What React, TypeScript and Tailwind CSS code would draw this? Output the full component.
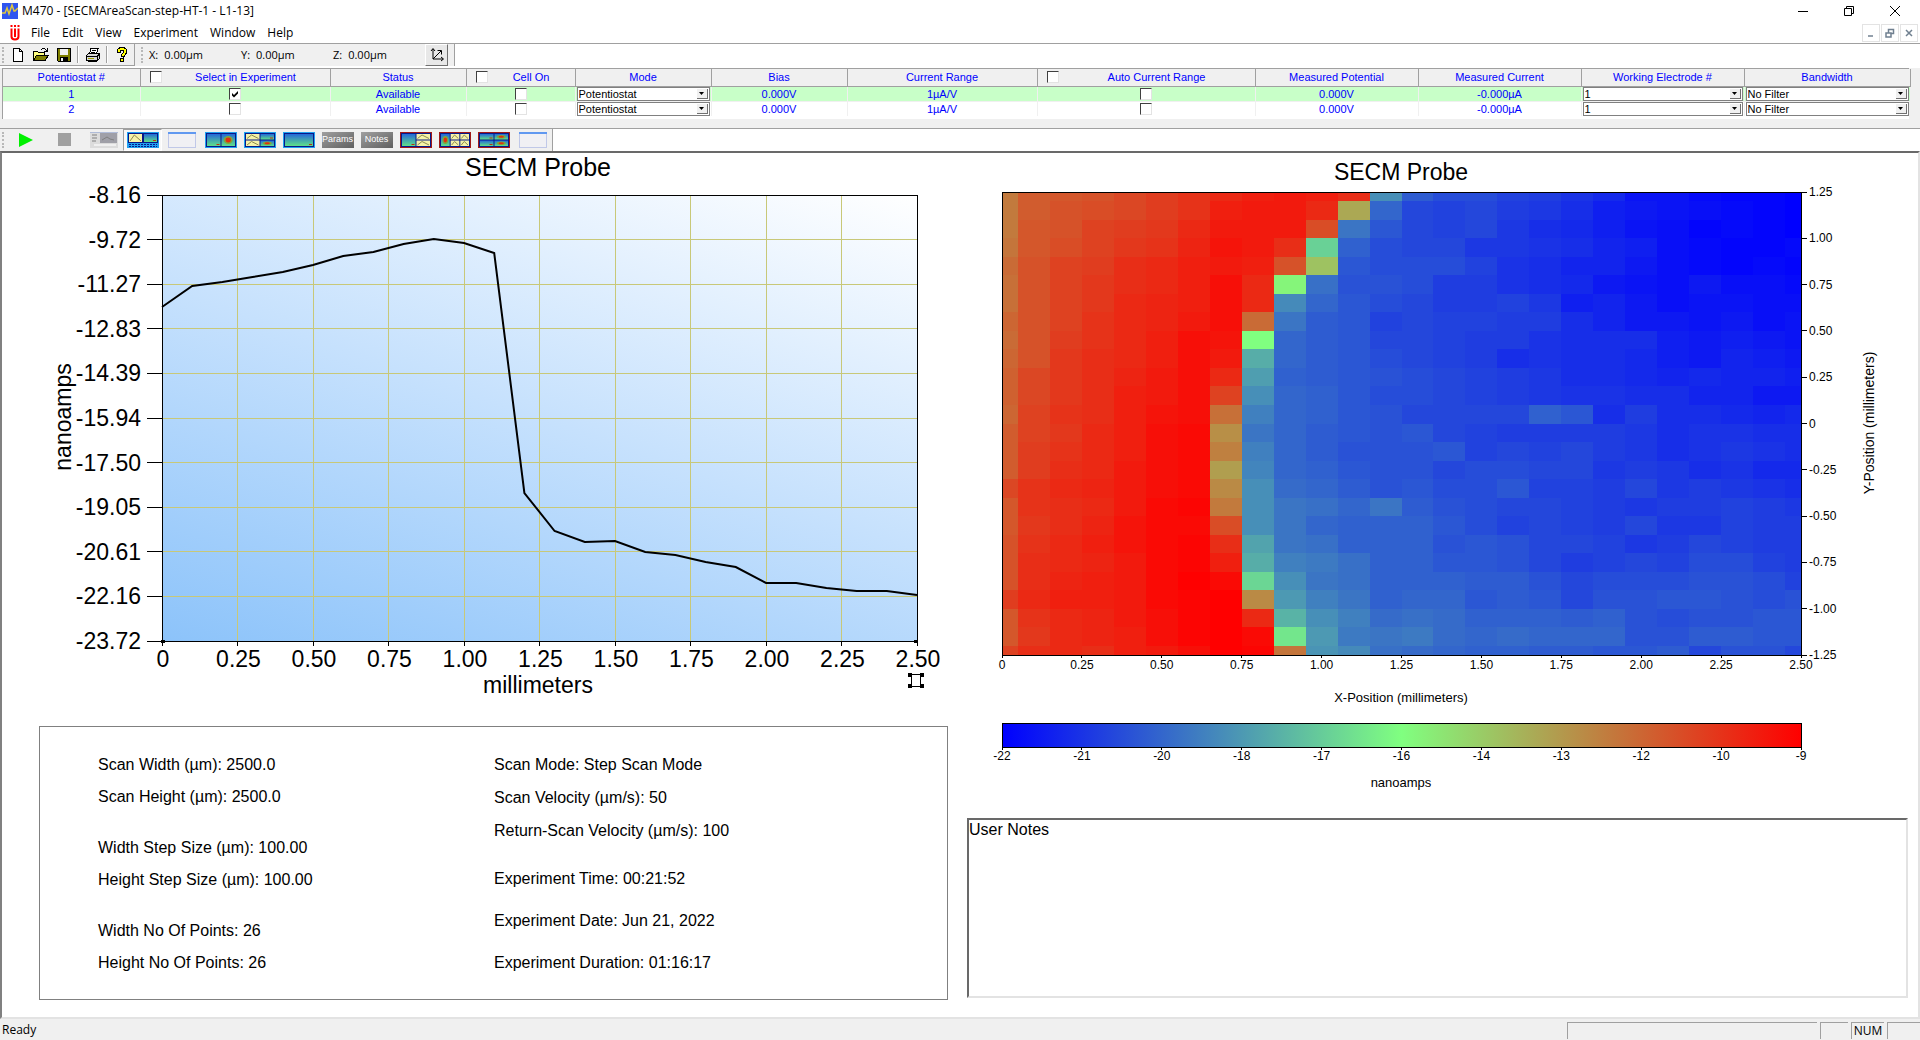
import React from "react";
import clsx from "clsx";

type Potentiostat = {
  id: number;
  selected: boolean;
  status: string;
  cellOn: boolean;
  mode: string;
  bias: string;
  range: string;
  autoRange: boolean;
  potential: string;
  current: string;
  electrode: string;
  bandwidth: string;
};

type PanelKind = "curve" | "map" | "spot";

const MENU_ITEMS = ["File", "Edit", "View", "Experiment", "Window", "Help"];

const POSITIONS = [
  { axis: "X", value: "0.00µm" },
  { axis: "Y", value: "0.00µm" },
  { axis: "Z", value: "0.00µm" },
];

const COLUMNS = [
  { label: "Potentiostat #", width: "w-[137px]" },
  { label: "Select in Experiment", width: "w-[190px]", checkable: true },
  { label: "Status", width: "w-[136px]" },
  { label: "Cell On", width: "w-[109px]", checkable: true },
  { label: "Mode", width: "w-[136px]" },
  { label: "Bias", width: "w-[136px]" },
  { label: "Current Range", width: "w-[190px]" },
  { label: "Auto Current Range", width: "w-[218px]", checkable: true },
  { label: "Measured Potential", width: "w-[163px]" },
  { label: "Measured Current", width: "w-[163px]" },
  { label: "Working Electrode #", width: "w-[163px]" },
  { label: "Bandwidth", width: "w-[166px]" },
];

const POTENTIOSTATS: Potentiostat[] = [1, 2].map((id) => ({
  id,
  selected: id === 1,
  status: "Available",
  cellOn: false,
  mode: "Potentiostat",
  bias: "0.000V",
  range: "1µA/V",
  autoRange: false,
  potential: "0.000V",
  current: "-0.000µA",
  electrode: "1",
  bandwidth: "No Filter",
}));

const LINE_Y_LABELS = [
  "-8.16",
  "-9.72",
  "-11.27",
  "-12.83",
  "-14.39",
  "-15.94",
  "-17.50",
  "-19.05",
  "-20.61",
  "-22.16",
  "-23.72",
];

const X_LABELS = [
  "0",
  "0.25",
  "0.50",
  "0.75",
  "1.00",
  "1.25",
  "1.50",
  "1.75",
  "2.00",
  "2.25",
  "2.50",
];

const MAP_Y_LABELS = [
  "1.25",
  "1.00",
  "0.75",
  "0.50",
  "0.25",
  "0",
  "-0.25",
  "-0.50",
  "-0.75",
  "-1.00",
  "-1.25",
];

const SCALE_LABELS = [
  "-22",
  "-21",
  "-20",
  "-18",
  "-17",
  "-16",
  "-14",
  "-13",
  "-12",
  "-10",
  "-9",
];

// heights of the scan line inside the plot, one per 0.1 mm
const SCAN_LINE = [
  112, 91, 87, 82, 77, 70, 61, 57, 49, 44, 48, 58, 298, 336, 347, 346, 357,
  360, 367, 372, 388, 388, 393, 396, 396, 400,
];

// area scan, 26 x 26 points, in percent of the colour scale
const AREA_SCAN = [
  "76 82 83 84 86 88 90 92 94 95 94 91 28 18 15 15 13 12 10 8 4 4 2 1 1 0",
  "76 82 84 85 86 88 90 94 95 95 92 67 20 14 13 14 12 11 9 6 5 4 3 2 1 0",
  "76 83 84 87 88 89 92 95 95 95 85 23 17 14 13 14 11 9 8 6 4 3 1 2 1 0",
  "77 83 85 87 89 90 93 96 95 91 41 19 15 14 14 11 11 10 9 7 6 3 2 1 1 2",
  "79 84 87 88 91 92 94 95 94 84 62 17 15 15 15 13 10 9 7 7 5 3 2 1 2 1",
  "78 84 87 89 91 92 94 97 92 52 22 16 16 15 12 12 10 9 8 5 4 3 5 3 3 2",
  "78 84 87 89 92 93 94 97 92 27 20 17 15 14 12 12 13 11 6 7 5 3 4 4 3 3",
  "80 84 87 90 92 93 95 97 79 23 18 17 13 14 13 13 12 12 9 7 5 5 4 5 3 4",
  "79 84 88 90 92 94 97 96 50 20 18 17 14 14 13 12 12 10 9 9 9 6 5 6 5 4",
  "80 84 89 91 92 94 97 95 34 20 18 17 15 14 13 12 9 10 9 9 8 6 5 7 6 5",
  "81 86 89 91 93 95 97 92 31 19 18 17 16 15 14 13 12 11 9 9 8 7 8 7 7 6",
  "81 86 89 91 94 95 97 87 28 20 19 17 15 15 14 13 12 11 10 10 9 9 7 7 5 5",
  "80 87 90 91 94 96 97 78 25 20 19 17 16 14 14 14 14 19 17 9 12 9 9 8 7 8",
  "82 87 89 92 94 97 98 72 23 20 18 17 16 17 14 13 12 12 12 12 11 9 10 10 9 9",
  "82 88 90 92 94 97 98 75 25 20 18 16 16 16 17 13 14 13 14 12 11 9 10 11 10 9",
  "82 88 91 92 95 97 98 69 26 20 19 17 16 16 14 15 15 14 14 11 12 11 9 10 8 8",
  "86 90 92 93 95 97 98 73 28 21 20 18 16 17 15 15 17 13 13 12 14 11 12 11 10 9",
  "83 90 91 92 95 98 99 76 28 23 22 20 23 18 16 15 14 14 13 12 11 12 12 13 12 11",
  "83 89 91 93 96 98 98 85 28 23 20 19 19 19 17 15 13 14 13 12 14 11 11 13 12 12",
  "84 90 92 94 96 98 99 91 32 23 22 19 19 19 16 17 16 14 14 13 11 12 14 13 12 12",
  "84 91 92 93 95 98 99 94 34 25 24 22 19 19 17 17 16 14 12 13 14 13 15 15 13 12",
  "84 91 93 94 95 98 100 98 42 28 23 22 19 19 19 18 18 16 14 15 15 15 16 16 15 13",
  "88 92 94 94 95 98 99 100 73 30 25 23 19 20 20 17 18 17 14 16 16 17 17 16 15 16",
  "83 90 92 93 95 97 99 100 92 35 28 25 21 22 21 19 19 19 18 19 16 15 16 16 17 17",
  "83 89 92 93 94 97 99 100 98 45 30 24 23 24 21 20 21 20 20 20 16 16 18 18 17 17",
  "87 91 92 91 94 95 97 100 99 77 29 27 22 21 20 19 19 18 18 17 17 18 14 16 16 14",
].map((row) => row.split(" ").map(Number));

const scaleColor = (percent: number) => {
  const t = percent / 100;
  const green = Math.round(255 * (1 - Math.abs(2 * t - 1)));
  return `rgb(${Math.round(255 * t)}, ${green}, ${Math.round(255 * (1 - t))})`;
};

const CheckBox = ({
  label,
  defaultChecked,
}: {
  label: string;
  defaultChecked?: boolean;
}) => (
  <span className="relative inline-block h-3 w-3 align-top">
    <input
      type="checkbox"
      aria-label={label}
      defaultChecked={defaultChecked}
      className="peer block h-3 w-3 appearance-none border border-t-[#404040] border-r-[#e3e3e3] border-b-[#e3e3e3] border-l-[#404040] bg-white"
    />
    <svg
      viewBox="0 0 12 12"
      className="pointer-events-none absolute inset-0 hidden h-3 w-3 peer-checked:block"
    >
      <path d="M3 5l2 2 4-4v2.500l-4 4-2-2z" fill="#000" />
    </svg>
  </span>
);

const ComboBox = ({ label, options }: { label: string; options: string[] }) => (
  <div className="relative mx-px h-[14px] border border-[#808080] bg-white">
    <select
      aria-label={label}
      className="block h-3 w-full appearance-none bg-white pl-px text-left leading-3 text-black"
    >
      {options.map((option) => (
        <option key={option}>{option}</option>
      ))}
    </select>
    <span className="pointer-events-none absolute top-px right-px flex h-[10px] w-[11px] items-center justify-center border-r border-b border-[#707070] bg-[#f0f0f0]">
      <svg viewBox="0 0 5 3" className="h-[3px] w-[5px]">
        <path d="M0 0h5L2.500 3z" fill="#000" />
      </svg>
    </span>
  </div>
);

const Grip = () => (
  <span className="mx-[2px] h-4 w-[2px] self-center border-l-2 border-dotted border-[#b8b8b8]" />
);

const TitleBar = () => (
  <div className="flex h-[22px] items-center bg-white pl-[2px] text-xs">
    <svg viewBox="0 0 16 16" className="h-4 w-4">
      <rect width="16" height="16" fill="#2f55f0" />
      <path
        d="M0 10h3l2-5 2 6 3-9 2 6h1l3-3"
        fill="none"
        stroke="#e0c840"
        strokeWidth="1.500"
      />
    </svg>
    <h1 className="ml-1">M470 - [SECMAreaScan-step-HT-1 - L1-13]</h1>
    <div className="ml-auto flex h-full pr-[2px]">
      <button
        type="button"
        aria-label="Minimize"
        className="flex w-[46px] items-center justify-center"
      >
        <svg viewBox="0 0 10 10" className="h-[10px] w-[10px]">
          <path d="M0 5.500h10" stroke="#000" />
        </svg>
      </button>
      <button
        type="button"
        aria-label="Restore"
        className="flex w-[46px] items-center justify-center"
      >
        <svg viewBox="0 0 10 10" className="h-[10px] w-[10px]">
          <path
            d="M.5 2.500h7v7h-7zM2.500 2.500v-2h7v7h-2"
            fill="none"
            stroke="#000"
          />
        </svg>
      </button>
      <button
        type="button"
        aria-label="Close"
        className="flex w-[46px] items-center justify-center"
      >
        <svg viewBox="0 0 10 10" className="h-[10px] w-[10px]">
          <path d="M0 0l10 10M10 0L0 10" stroke="#000" />
        </svg>
      </button>
    </div>
  </div>
);

const ChildButton = ({ label, path }: { label: string; path: string }) => (
  <button
    type="button"
    aria-label={label}
    className="flex h-[18px] w-[18px] items-center justify-center border border-[#e3e3e3] bg-white"
  >
    <svg viewBox="0 0 10 10" className="h-[10px] w-[10px]">
      <path d={path} fill="none" stroke="#708090" strokeWidth="1.500" />
    </svg>
  </button>
);

const MenuBar = () => (
  <div className="flex h-[22px] items-center border-b border-[#a0a0a0] bg-white pl-[10px] text-xs">
    <svg viewBox="0 0 10 16" className="mr-[5px] h-4 w-[10px]">
      <path
        d="M1.500 3.500v8q0 3 3.500 3t3.500-3v-8M5 3.500V12"
        fill="none"
        stroke="#f00"
        strokeWidth="2"
      />
      <path d="M.5 0h2v2h-2zM4 0h2v2H4zM7.500 0h2v2h-2z" fill="#f00" />
    </svg>
    <nav className="flex">
      {MENU_ITEMS.map((item) => (
        <button key={item} type="button" className="px-[6px]">
          {item}
        </button>
      ))}
    </nav>
    <div className="ml-auto flex gap-px pr-[2px]">
      <ChildButton label="Minimize child" path="M2 8h5" />
      <ChildButton
        label="Restore child"
        path="M1 5h5v4H1zM3.500 5V1.500h5v4H6"
      />
      <ChildButton label="Close child" path="M2 2l6 6M8 2L2 8" />
    </div>
  </div>
);

const FileIcon = ({ name }: { name: string }) => (
  <svg viewBox="0 0 16 16" className="h-4 w-4" shapeRendering="crispEdges">
    {name === "New" && (
      <path
        d="M3.500 1.500h6l3 3v10h-9zM9.500 1.500v3h3"
        fill="#fff"
        stroke="#000"
      />
    )}
    {name === "Open" && (
      <>
        <path d="M.5 13.500v-9h4l1 1h6v3" fill="#ffff80" stroke="#000" />
        <path d="M.5 13.500l3-5h12l-3.500 5z" fill="#808000" stroke="#000" />
        <path d="M8 3q3-3 5 0l1 1V1M11 4h3" fill="none" stroke="#000" />
      </>
    )}
    {name === "Save" && (
      <>
        <path d="M1.500 1.500h13v13h-12l-1-1z" fill="#808000" stroke="#000" />
        <path d="M4 2h8v6H4z" fill="#f0f0f0" />
        <path d="M4 10h8v5H4z" fill="#000" />
        <path d="M5 11h2v3H5z" fill="#f0f0f0" />
      </>
    )}
    {name === "Print" && (
      <>
        <path d="M4.500 6.500l1.500-5h7l-1.500 5" fill="#fff" stroke="#000" />
        <path d="M7 3h4M6 5h4" stroke="#000" />
        <path d="M1.500 8.500l2-2h11v5l-2 2h-11z" fill="#d8d8d8" stroke="#000" />
        <path d="M1 9.500h11v4M12 9l3-2" fill="none" stroke="#000" />
        <path d="M3 11.500h6" stroke="#a0a000" />
        <path d="M3 14.500h9" stroke="#000" />
      </>
    )}
    {name === "Help" && (
      <>
        <path
          d="M5 6V4q0-2 3-2t3 2-1 3-2 3"
          fill="none"
          stroke="#000"
          strokeWidth="4"
        />
        <path
          d="M5 5V4q0-2 3-2t3 2-1 3-2 2"
          fill="none"
          stroke="#ff0"
          strokeWidth="2"
        />
        <path d="M6.500 11.500h3v3h-3z" fill="#ff0" stroke="#000" />
      </>
    )}
  </svg>
);

const FileButton = ({ name }: { name: string }) => (
  <button
    type="button"
    aria-label={name}
    className="flex w-[23px] items-center justify-center"
  >
    <FileIcon name={name} />
  </button>
);

const Divider = () => (
  <span className="mx-[2px] my-[2px] w-[2px] border-r border-l border-r-white border-l-[#a0a0a0]" />
);

const MainToolbar = () => (
  <div className="h-6 bg-white pb-[2px]">
    <div className="flex h-full">
      <div className="flex border-r border-b border-[#a0a0a0] bg-[#f0f0f0] pr-px">
        <Grip />
        <FileButton name="New" />
        <FileButton name="Open" />
        <FileButton name="Save" />
        <Divider />
        <FileButton name="Print" />
        <Divider />
        <FileButton name="Help" />
      </div>
      <div className="flex items-center border-r border-[#a0a0a0] bg-[#f0f0f0] pr-[6px] pl-1 text-[11px]">
        <Grip />
        <dl className="ml-1 flex">
          {POSITIONS.map(({ axis, value }) => (
            <div key={axis} className="flex w-[92px] gap-[6px]">
              <dt>{axis}:</dt>
              <dd>{value}</dd>
            </div>
          ))}
        </dl>
        <button
          type="button"
          aria-label="Axes"
          className="flex h-[22px] w-[23px] items-center justify-center border border-t-white border-r-[#707070] border-b-[#707070] border-l-white bg-[#e8e8e8]"
        >
          <svg viewBox="0 0 16 16" className="h-4 w-4">
            <path
              d="M4 2v10h10M4 12l8-8M2 4l2-2.500L6 4M12 10l2.500 2-2.500 2M8.500 3.500h4v4"
              fill="none"
              stroke="#000"
            />
          </svg>
        </button>
      </div>
    </div>
  </div>
);

const PotentiostatTable = () => (
  <div className="border-b border-[#a0a0a0] bg-[#f0f0f0] pr-[11px] pb-[9px] pl-[2px] font-['Liberation_Sans',Arial,sans-serif] text-[11px]">
    <div className="border-t border-l border-[#a0a0a0] bg-white pb-[3px]">
      <table className="w-full table-fixed border-collapse text-center leading-3 text-[#0000ff]">
        <colgroup>
          {COLUMNS.map(({ label, width }) => (
            <col key={label} className={width} />
          ))}
        </colgroup>
        <thead>
          <tr className="h-[17px] border-b border-[#a0a0a0] bg-[#f0f0f0]">
            {COLUMNS.map(({ label, checkable }) => (
              <th
                key={label}
                scope="col"
                className="border-r border-[#a0a0a0] p-0 font-normal"
              >
                {checkable ? (
                  <div className="flex items-center pl-[9px]">
                    <CheckBox label={`${label}: all`} />
                    <span className="flex-1">{label}</span>
                  </div>
                ) : (
                  label
                )}
              </th>
            ))}
          </tr>
        </thead>
        <tbody>
          {POTENTIOSTATS.map((item) => (
            <tr
              key={item.id}
              className={clsx(
                "h-[14px] border-t border-[#f0f0f0] [&>td]:border-r [&>td]:border-[#f0f0f0] [&>td]:p-0",
                item.selected && "bg-[#c8ffc8]"
              )}
            >
              <td>{item.id}</td>
              <td>
                <CheckBox
                  label={`Select potentiostat ${item.id}`}
                  defaultChecked={item.selected}
                />
              </td>
              <td>{item.status}</td>
              <td>
                <CheckBox
                  label={`Cell on ${item.id}`}
                  defaultChecked={item.cellOn}
                />
              </td>
              <td>
                <ComboBox label={`Mode ${item.id}`} options={[item.mode]} />
              </td>
              <td>{item.bias}</td>
              <td>{item.range}</td>
              <td>
                <CheckBox
                  label={`Auto current range ${item.id}`}
                  defaultChecked={item.autoRange}
                />
              </td>
              <td>{item.potential}</td>
              <td>{item.current}</td>
              <td>
                <ComboBox
                  label={`Working electrode ${item.id}`}
                  options={[item.electrode]}
                />
              </td>
              <td>
                <ComboBox
                  label={`Bandwidth ${item.id}`}
                  options={[item.bandwidth]}
                />
              </td>
            </tr>
          ))}
        </tbody>
      </table>
    </div>
  </div>
);

const IconPanel = ({
  kind,
  x,
  y,
  width,
  height,
}: {
  kind: PanelKind;
  x: number;
  y: number;
  width: number;
  height: number;
}) => (
  <g transform={`translate(${x} ${y})`}>
    <rect
      width={width}
      height={height}
      fill={kind === "curve" ? "#f6f2a8" : "url(#panel-fill)"}
    />
    {kind === "curve" && (
      <path
        d={`M1 ${height - 1}l${width / 3} ${2 - height}L${width - 1} ${height - 1}`}
        fill="none"
        stroke="#8c8850"
      />
    )}
    {kind === "map" && (
      <path d={`M${width - 4} ${height - 1.5}h3`} stroke="#c03010" />
    )}
    {kind === "spot" && (
      <>
        <ellipse
          cx={width / 2}
          cy={height / 2}
          rx={width / 3}
          ry={height / 3}
          fill="#80a838"
        />
        <ellipse
          cx={width / 2}
          cy={height / 2}
          rx={width / 5}
          ry={height / 5}
          fill="#e03010"
        />
      </>
    )}
  </g>
);

const LayoutIcon = ({
  frame,
  columns,
}: {
  frame: string;
  columns: PanelKind[][];
}) => {
  const width = (29 - columns.length) / columns.length;

  return (
    <svg viewBox="0 0 32 16" className="h-4 w-8">
      <rect width="32" height="16" fill={frame} />
      <rect x="1" y="1" width="30" height="14" fill="#081888" />
      {columns.map((kinds, column) =>
        kinds.map((kind, row) => {
          const height = (13 - kinds.length) / kinds.length;
          return (
            <IconPanel
              key={`${column}-${row}`}
              kind={kind}
              x={2 + column * (width + 1)}
              y={2 + row * (height + 1)}
              width={width}
              height={height}
            />
          );
        })
      )}
    </svg>
  );
};

const WindowIcon = () => (
  <svg viewBox="0 0 32 16" className="h-4 w-8">
    <rect x="2.500" y=".5" width="27" height="15" fill="#f0f0f4" stroke="#c0c8e8" />
    <rect x="2" width="28" height="2" fill="#6098f0" />
  </svg>
);

const TextIcon = ({ text }: { text: string }) => (
  <span className="flex h-4 w-8 items-center justify-center bg-linear-to-br from-[#a0a0a0] to-[#606060] font-['Liberation_Sans',Arial,sans-serif] text-[9px] text-white">
    {text}
  </span>
);

const VIEW_BUTTONS = [
  {
    label: "Run",
    icon: (
      <svg viewBox="0 0 14 14" className="h-[14px] w-[14px]">
        <path d="M0 0l14 7-14 7z" fill="#00f000" />
      </svg>
    ),
  },
  {
    label: "Stop",
    icon: <span className="h-[13px] w-[13px] bg-[#a0a0a0]" />,
  },
  {
    label: "Details",
    icon: (
      <svg viewBox="0 0 32 16" className="h-4 w-8">
        <rect x="2" width="28" height="16" fill="#dcdcdc" />
        <rect x="2" width="28" height="1" fill="#b0bcd8" />
        <rect x="12" y="1" width="17" height="10" fill="#a0a0a8" />
        <path
          d="M14 8l5-3 3 2 4 1M4 3h5M4 6h5M4 9h4"
          fill="none"
          stroke="#808080"
        />
        <path d="M6 13h22" stroke="#f0f0f0" strokeWidth="2" />
      </svg>
    ),
  },
  {
    label: "Graph and map",
    pressed: true,
    icon: (
      <svg viewBox="0 0 32 16" className="h-4 w-8">
        <rect width="32" height="16" fill="#20a0f0" />
        <rect x="1" y="1" width="30" height="10" fill="#081888" />
        <IconPanel kind="curve" x={2} y={2} width={13} height={8} />
        <IconPanel kind="map" x={17} y={2} width={13} height={8} />
        <path
          d="M2 12.500h28M2 14.500h28"
          stroke="#081888"
          strokeDasharray="2 1"
        />
      </svg>
    ),
  },
  { label: "Window", icon: <WindowIcon /> },
  {
    label: "Two maps",
    icon: <LayoutIcon frame="#20a0f0" columns={[["map"], ["spot"]]} />,
  },
  {
    label: "Graphs and maps",
    icon: (
      <LayoutIcon
        frame="#20a0f0"
        columns={[
          ["curve", "curve"],
          ["map", "spot"],
        ]}
      />
    ),
  },
  {
    label: "Single map",
    icon: <LayoutIcon frame="#20a0f0" columns={[["map"]]} />,
  },
  { label: "Parameters", icon: <TextIcon text="Params" /> },
  { label: "Notes", icon: <TextIcon text="Notes" /> },
  {
    label: "Map and graphs",
    icon: (
      <LayoutIcon frame="#a01818" columns={[["map"], ["curve", "curve"]]} />
    ),
  },
  {
    label: "Spot and graphs",
    icon: (
      <LayoutIcon
        frame="#a01818"
        columns={[["spot"], ["curve", "curve"], ["curve", "curve"]]}
      />
    ),
  },
  {
    label: "Four maps",
    icon: (
      <LayoutIcon
        frame="#a01818"
        columns={[
          ["map", "map"],
          ["spot", "spot"],
        ]}
      />
    ),
  },
  { label: "Blank window", icon: <WindowIcon /> },
];

const ViewToolbar = () => (
  <div className="flex h-[22px] bg-white">
    <svg width="0" height="0" className="absolute">
      <defs>
        <linearGradient id="panel-fill" x1="0" y1="0" x2="0" y2="1">
          <stop offset="0" stopColor="#2468d8" />
          <stop offset="1" stopColor="#60e088" />
        </linearGradient>
      </defs>
    </svg>
    <div className="flex border-r border-[#a0a0a0] bg-[#f0f0f0]">
      <Grip />
      {VIEW_BUTTONS.map(({ label, icon, pressed }) => (
        <button
          key={label}
          type="button"
          aria-label={label}
          className={clsx(
            "flex w-[39px] items-center justify-center border",
            pressed
              ? "border-t-[#a0a0a0] border-r-white border-b-white border-l-[#a0a0a0] bg-[#f8f8f8]"
              : "border-transparent"
          )}
        >
          {icon}
        </button>
      ))}
    </div>
  </div>
);

// plot area: 755 x 446
const LineChart = () => {
  const points = SCAN_LINE.map((y, i) => `${(i * 755) / 25},${y}`).join(" ");

  return (
    <svg
      viewBox="0 0 958 573"
      className="block w-full"
      role="img"
      aria-label="SECM Probe line scan"
    >
      <defs>
        <linearGradient
          id="plot-fill"
          gradientUnits="userSpaceOnUse"
          x1="0"
          y1="446"
          x2="220"
          y2="-186"
        >
          <stop offset="0" stopColor="#8cc3fa" />
          <stop offset="0.500" stopColor="#c6e1fd" />
          <stop offset="1" stopColor="#ffffff" />
        </linearGradient>
      </defs>
      <text x="536" y="23" textAnchor="middle" fontSize="25">
        SECM Probe
      </text>
      <text
        transform="translate(69 264) rotate(-90)"
        textAnchor="middle"
        fontSize="23"
      >
        nanoamps
      </text>
      <g transform="translate(160 42)">
        <rect width="755" height="446" fill="url(#plot-fill)" />
        <g shapeRendering="crispEdges">
          {X_LABELS.slice(1, -1).map((label, i) => (
            <path
              key={label}
              d={`M${(i + 1) * 75.5} 0v446`}
              stroke="#c8c878"
            />
          ))}
          {LINE_Y_LABELS.slice(1, -1).map((label, i) => (
            <path key={label} d={`M0 ${(i + 1) * 44.6}h755`} stroke="#c8c878" />
          ))}
          {X_LABELS.map((label, i) => (
            <path key={label} d={`M${i * 75.5} 446v5`} stroke="#000" />
          ))}
          {LINE_Y_LABELS.map((label, i) => (
            <path key={label} d={`M-15 ${i * 44.6}h15`} stroke="#000" />
          ))}
          <rect width="755" height="446" fill="none" stroke="#000" />
          <path d="M-1 445h4v3h-4zM752 445h4v3h-4z" fill="#000" />
        </g>
        <polyline
          points={points}
          fill="none"
          stroke="#000"
          strokeWidth="2"
        />
        {LINE_Y_LABELS.map((label, i) => (
          <text
            key={label}
            x="-21"
            y={i * 44.6 + 8}
            textAnchor="end"
            fontSize="23"
          >
            {label}
          </text>
        ))}
        {X_LABELS.map((label, i) => (
          <text
            key={label}
            x={i * 75.5 + 1}
            y="472"
            textAnchor="middle"
            fontSize="23"
          >
            {label}
          </text>
        ))}
      </g>
      <text x="536" y="540" textAnchor="middle" fontSize="23">
        millimeters
      </text>
      <g transform="translate(906 520)" shapeRendering="crispEdges">
        <path d="M3.500 1.500h9v12h-9z" fill="none" stroke="#000" />
        <path
          d="M0 0h4v4H0zM12 0h4v4h-4zM0 11h4v4H0zM12 11h4v4h-4z"
          fill="#000"
        />
      </g>
    </svg>
  );
};

const CELL_WIDTH = 799 / 25;
const CELL_HEIGHT = 463 / 25;

// map area: 799 x 463. Points on the edge get half a cell.
const AreaMap = () => (
  <svg
    viewBox="0 0 958 665"
    className="block w-full"
    role="img"
    aria-label="SECM Probe area scan"
  >
    <defs>
      <linearGradient id="scale-fill">
        <stop offset="0" stopColor="#0000ff" />
        <stop offset="0.500" stopColor="#80ff80" />
        <stop offset="1" stopColor="#ff0000" />
      </linearGradient>
      <clipPath id="map-clip">
        <rect width="799" height="463" />
      </clipPath>
    </defs>
    <text x="441" y="27" textAnchor="middle" fontSize="23">
      SECM Probe
    </text>
    <g transform="translate(42 39)">
      <g clipPath="url(#map-clip)" shapeRendering="crispEdges">
        {AREA_SCAN.map((row, y) =>
          row.map((value, x) => (
            <rect
              key={`${x}-${y}`}
              x={(x - 0.5) * CELL_WIDTH}
              y={(y - 0.5) * CELL_HEIGHT}
              width={CELL_WIDTH}
              height={CELL_HEIGHT}
              fill={scaleColor(value)}
            />
          ))
        )}
      </g>
      <g shapeRendering="crispEdges" stroke="#000">
        <rect width="799" height="463" fill="none" />
        {X_LABELS.map((label, i) => (
          <path key={label} d={`M${i * 79.9} 463v3`} />
        ))}
        {MAP_Y_LABELS.map((label, i) => (
          <path key={label} d={`M799 ${i * 46.3}h6`} />
        ))}
      </g>
      {X_LABELS.map((label, i) => (
        <text
          key={label}
          x={i * 79.9}
          y="477"
          textAnchor="middle"
          fontSize="12"
        >
          {label}
        </text>
      ))}
      {MAP_Y_LABELS.map((label, i) => (
        <text key={label} x="807" y={i * 46.3 + 4} fontSize="12">
          {label}
        </text>
      ))}
    </g>
    <text
      transform="translate(914 270) rotate(-90)"
      textAnchor="middle"
      fontSize="14"
    >
      Y-Position (millimeters)
    </text>
    <text x="441" y="549" textAnchor="middle" fontSize="13">
      X-Position (millimeters)
    </text>
    <g transform="translate(42 570)">
      <rect
        width="799"
        height="24"
        fill="url(#scale-fill)"
        stroke="#000"
        shapeRendering="crispEdges"
      />
      {SCALE_LABELS.map((label, i) => (
        <React.Fragment key={label}>
          <path
            d={`M${i * 79.9} 24v3`}
            stroke="#000"
            shapeRendering="crispEdges"
          />
          <text x={i * 79.9} y="37" textAnchor="middle" fontSize="12">
            {label}
          </text>
        </React.Fragment>
      ))}
    </g>
    <text x="441" y="634" textAnchor="middle" fontSize="13">
      nanoamps
    </text>
  </svg>
);

const ScanDetails = () => (
  <div className="mr-3 ml-[37px] grid grid-cols-[396px_1fr] border border-[#808080] pt-[26px] pb-6 pl-[58px] text-base leading-6">
    <div className="flex flex-col gap-[27px]">
      <div className="flex flex-col gap-2">
        <p>Scan Width (µm): 2500.0</p>
        <p>Scan Height (µm): 2500.0</p>
      </div>
      <div className="flex flex-col gap-2">
        <p>Width Step Size (µm): 100.00</p>
        <p>Height Step Size (µm): 100.00</p>
      </div>
      <div className="flex flex-col gap-2">
        <p>Width No Of Points: 26</p>
        <p>Height No Of Points: 26</p>
      </div>
    </div>
    <div className="flex flex-col gap-6">
      <div className="flex flex-col gap-[9px]">
        <p>Scan Mode: Step Scan Mode</p>
        <p>Scan Velocity (µm/s): 50</p>
        <p>Return-Scan Velocity (µm/s): 100</p>
      </div>
      <div className="flex flex-col gap-[18px]">
        <p>Experiment Time: 00:21:52</p>
        <p>Experiment Date: Jun 21, 2022</p>
        <p>Experiment Duration: 01:16:17</p>
      </div>
    </div>
  </div>
);

const StatusBar = () => (
  <footer className="flex h-[21px] items-start bg-[#f0f0f0] pt-[3px] pl-[2px] text-xs">
    <span className="mr-auto leading-4">Ready</span>
    <div className="flex h-[17px] gap-[3px] [&>span]:border-t [&>span]:border-l [&>span]:border-[#a0a0a0]">
      <span className="w-[250px]" />
      <span className="w-7" />
      <span className="w-[33px] text-center leading-4">NUM</span>
      <span className="w-[33px]" />
    </div>
  </footer>
);

const App = () => (
  <div className="flex min-h-screen flex-col bg-white font-['Open_Sans','Segoe_UI',sans-serif] text-black">
    <TitleBar />
    <MenuBar />
    <MainToolbar />
    <PotentiostatTable />
    <ViewToolbar />
    <main className="grid flex-1 grid-cols-2 items-start border-2 border-t-[#696969] border-r-[#e3e3e3] border-b-[#e3e3e3] border-l-[#808080] font-['Liberation_Sans',Arial,sans-serif]">
      <section>
        <LineChart />
        <ScanDetails />
      </section>
      <section>
        <AreaMap />
        <div className="pr-[10px] pl-[7px]">
          <textarea
            aria-label="User notes"
            defaultValue="User Notes"
            className="block h-[180px] w-full resize-none border-2 border-t-[#696969] border-r-[#e3e3e3] border-b-[#e3e3e3] border-l-[#696969] bg-white text-base leading-5"
          />
        </div>
      </section>
    </main>
    <StatusBar />
  </div>
);

export default App;
